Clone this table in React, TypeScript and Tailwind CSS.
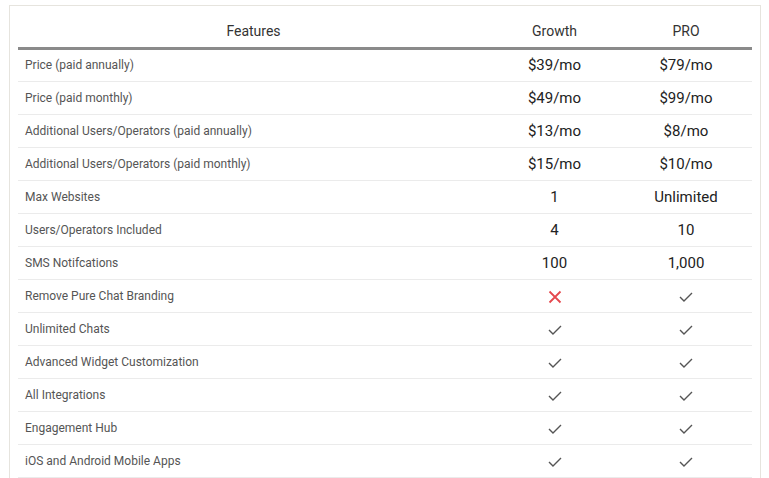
const rows: { label: string; growth: string | boolean; pro: string | boolean }[] = [
  { label: 'Price (paid annually)', growth: '$39/mo', pro: '$79/mo' },
  { label: 'Price (paid monthly)', growth: '$49/mo', pro: '$99/mo' },
  { label: 'Additional Users/Operators (paid annually)', growth: '$13/mo', pro: '$8/mo' },
  { label: 'Additional Users/Operators (paid monthly)', growth: '$15/mo', pro: '$10/mo' },
  { label: 'Max Websites', growth: '1', pro: 'Unlimited' },
  { label: 'Users/Operators Included', growth: '4', pro: '10' },
  { label: 'SMS Notifcations', growth: '100', pro: '1,000' },
  { label: 'Remove Pure Chat Branding', growth: false, pro: true },
  { label: 'Unlimited Chats', growth: true, pro: true },
  { label: 'Advanced Widget Customization', growth: true, pro: true },
  { label: 'All Integrations', growth: true, pro: true },
  { label: 'Engagement Hub', growth: true, pro: true },
  { label: 'iOS and Android Mobile Apps', growth: true, pro: true },
];

function Check() {
  return (
    <svg width="14" height="10" viewBox="0 0 14 10" className="inline-block">
      <path d="M1 5 L5 9 L13 1" fill="none" stroke="#555" strokeWidth="1.4" />
    </svg>
  );
}

function Cross() {
  return (
    <svg width="14" height="14" viewBox="0 0 14 14" className="inline-block">
      <path d="M1.5 1.5 L12.5 12.5 M12.5 1.5 L1.5 12.5" fill="none" stroke="#e5484d" strokeWidth="1.8" />
    </svg>
  );
}

function Cell({ value }: { value: string | boolean }) {
  if (value === true) return <Check />;
  if (value === false) return <Cross />;
  return <span>{value}</span>;
}

export default function App() {
  return (
    <div className="bg-white min-h-screen pl-[9px] pt-[5px] pr-2" style={{ fontFamily: 'Roboto, sans-serif' }}>
      <div className="w-[752px] border border-[#e6e4de] px-2 pb-4">
        <table className="w-full border-collapse">
          <thead>
            <tr className="h-[42px] border-b-[3px] border-[#8a8a8a] text-[14px] text-[#333]">
              <th className="w-[471px] font-normal text-center pt-[10px]">Features</th>
              <th className="w-[131px] font-normal text-center pt-[10px]">Growth</th>
              <th className="font-normal text-center pt-[10px]">PRO</th>
            </tr>
          </thead>
          <tbody>
            {rows.map((row) => (
              <tr key={row.label} className="h-[33px] border-b border-[#ebebeb]">
                <td className="pl-[7px] text-[12px] text-[#555]">{row.label}</td>
                <td className="text-center text-[15px] text-[#222] pt-[1px]">
                  <Cell value={row.growth} />
                </td>
                <td className="text-center text-[15px] text-[#222] pt-[1px]">
                  <Cell value={row.pro} />
                </td>
              </tr>
            ))}
          </tbody>
        </table>
      </div>
    </div>
  );
}
